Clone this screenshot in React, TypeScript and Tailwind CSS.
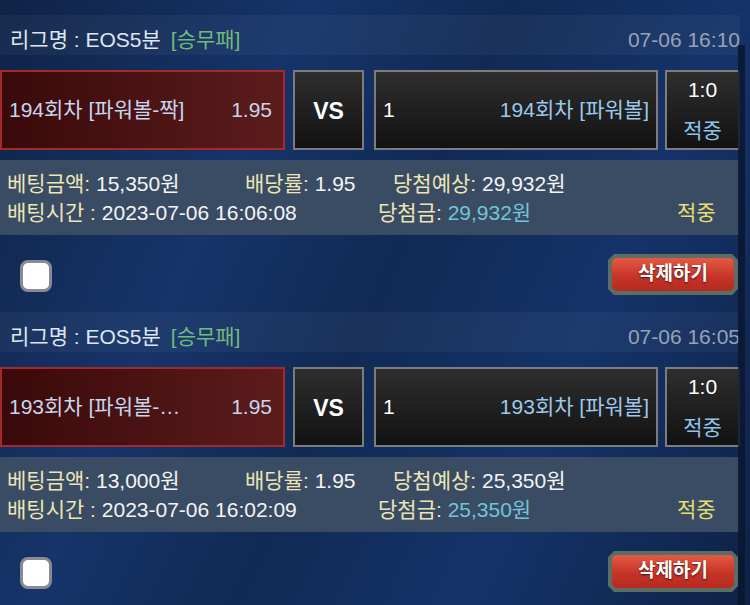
import React from 'react';

type Bet = {
  date: string;
  pick: string;
  round: string;
  amount: string;
  expected: string;
  betTime: string;
  win: string;
};

const bets: Bet[] = [
  {
    date: '07-06 16:10',
    pick: '194회차 [파워볼-짝]',
    round: '194회차 [파워볼]',
    amount: '15,350원',
    expected: '29,932원',
    betTime: '2023-07-06 16:06:08',
    win: '29,932원',
  },
  {
    date: '07-06 16:05',
    pick: '193회차 [파워볼-…',
    round: '193회차 [파워볼]',
    amount: '13,000원',
    expected: '25,350원',
    betTime: '2023-07-06 16:02:09',
    win: '25,350원',
  },
];

function BetCard({ bet }: { bet: Bet }) {
  return (
    <div className="flex flex-col pb-[17px]">
      {/* League header */}
      <div className="flex h-[40px] items-center justify-between bg-white/[0.04] pl-[10px] pr-[0px] pt-[10px] text-[21px]">
        <div className="flex items-center gap-[10px]">
          <span className="text-[#dfe6f0]">리그명 : EOS5분</span>
          <span className="text-[#6fba7c]">[승무패]</span>
        </div>
        <span className="whitespace-nowrap text-[#97a3b5]">{bet.date}</span>
      </div>

      {/* Match row */}
      <div className="mt-[15px] flex h-[80px] text-[21px]">
        <div className="flex w-[285px] items-center justify-between border-2 border-[#a3292a] bg-[linear-gradient(90deg,#3a0909,#5c1c1c)] pl-[7px] pr-[11px] text-[#c5d6ef]">
          <span>{bet.pick}</span>
          <span>1.95</span>
        </div>
        <div className="ml-[8px] flex w-[71px] items-center justify-center border-2 border-[#7c7c7c] bg-[linear-gradient(180deg,#2e2e2e,#121212)] pt-[2px] text-[23px] font-bold text-white">
          VS
        </div>
        <div className="ml-[10px] flex w-[284px] items-center justify-between border-2 border-[#7c7c7c] bg-[linear-gradient(180deg,#2e2e2e,#121212)] pl-[7px] pr-[7px]">
          <span className="text-white">1</span>
          <span className="text-[#9cc8ec]">{bet.round}</span>
        </div>
        <div className="ml-[7px] flex w-[75px] flex-col items-center justify-center gap-[20px] border-2 border-[#7c7c7c] bg-[linear-gradient(180deg,#2e2e2e,#121212)] leading-none">
          <span className="text-white">1:0</span>
          <span className="text-[#8ec3ea]">적중</span>
        </div>
      </div>

      {/* Info panel */}
      <div className="mt-[10px] flex h-[75px] flex-col justify-center gap-[4px] bg-[#3a4b64] pl-[7px] text-[21px] leading-[25px] text-[#f4f4f4]">
        <div className="flex">
          <span className="w-[238px]">
            <span className="text-[#ede5b4]">베팅금액:</span> {bet.amount}
          </span>
          <span className="w-[148px]">
            <span className="text-[#ede5b4]">배당률:</span> 1.95
          </span>
          <span>
            <span className="text-[#ede5b4]">당첨예상:</span> {bet.expected}
          </span>
        </div>
        <div className="flex">
          <span className="w-[371px]">
            <span className="text-[#ede5b4]">배팅시간 :</span> {bet.betTime}
          </span>
          <span className="w-[299px]">
            <span className="text-[#ede5b4]">당첨금:</span> <span className="text-[#6fc6d6]">{bet.win}</span>
          </span>
          <span className="text-[#e6df6e]">적중</span>
        </div>
      </div>

      {/* Actions */}
      <div className="mt-[19px] flex h-[41px] items-center justify-between pr-[2px]">
        <div className="ml-[20px] mt-[3px] h-[32px] w-[32px] rounded-[8px] border-[3px] border-[#8a8b92] bg-white" />
        <div className="h-[41px] w-[130px] bg-[#5a6e66] p-[4px] [clip-path:polygon(6px_0,calc(100%-6px)_0,100%_6px,100%_calc(100%-6px),calc(100%-6px)_100%,6px_100%,0_calc(100%-6px),0_6px)]">
          <div className="flex h-full items-center justify-center rounded-[5px] bg-[linear-gradient(180deg,#e45a44,#c73428_55%,#b52a20)] text-[19px] font-bold text-white [text-shadow:0_1px_2px_rgba(0,0,0,0.7)]">
            삭제하기
          </div>
        </div>
      </div>
    </div>
  );
}

export default function App() {
  return (
    <div
      className="relative h-[605px] w-[750px] overflow-hidden bg-[linear-gradient(115deg,#0f2346_0%,#16346a_30%,#112a55_50%,#15336a_72%,#0e2246_100%)]"
      style={{ fontFamily: '"Liberation Sans", "Noto Sans CJK KR", sans-serif' }}
    >
      <div className="w-[740px] pt-[15px]">
        {bets.map((bet) => (
          <BetCard key={bet.date} bet={bet} />
        ))}
      </div>

      {/* scrollbar */}
      <div className="absolute bottom-0 right-[5px] top-[45px] w-[7px] bg-[#0a1630]/85" />
    </div>
  );
}
